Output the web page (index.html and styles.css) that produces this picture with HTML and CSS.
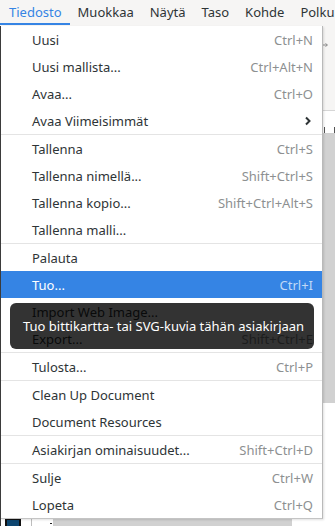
FILE: index.html
```html
<!DOCTYPE html>
<html lang="fi">
<head>
<meta charset="utf-8">
<title>Tiedosto</title>
<link rel="stylesheet" href="styles.css">
</head>
<body>
<div class="app">
  <nav class="menubar">
    <span class="mb-item active">Tiedosto</span>
    <span class="mb-item">Muokkaa</span>
    <span class="mb-item">Näytä</span>
    <span class="mb-item">Taso</span>
    <span class="mb-item">Kohde</span>
    <span class="mb-item">Polku</span>
  </nav>
  <div class="workspace">
    <div class="edge"></div>
    <div class="main">
      <div class="toolbar">
        <svg class="tb-arrow" width="6" height="6" viewBox="0 0 6 6"><path d="M0 3H4M2.5 1.5L4.5 3L2.5 4.5" fill="none" stroke="#8a8a8a" stroke-width="1"/></svg>
      </div>
      <div class="ruler"></div>
      <div class="canvas-area">
        <div class="side-panel">
          <div class="swatch-row">
            <span class="swatch"></span>
            <span class="vline"></span>
            <span class="tick"></span>
          </div>
        </div>
        <div class="canvas">
          <div class="sheet-top"></div>
          <div class="sheet-bottom"></div>
        </div>
      </div>
    </div>
  </div>

  <div class="menu">
    <div class="row"><span class="label">Uusi</span><span class="key">Ctrl+N</span></div>
    <div class="row"><span class="label">Uusi mallista...</span><span class="key">Ctrl+Alt+N</span></div>
    <div class="row"><span class="label">Avaa...</span><span class="key">Ctrl+O</span></div>
    <div class="row"><span class="label">Avaa Viimeisimmät</span><svg class="chev" width="8" height="10" viewBox="0 0 8 10"><path d="M2 1.5L5.5 5L2 8.5" fill="none" stroke="#2e3436" stroke-width="2"/></svg></div>
    <div class="sep"></div>
    <div class="row"><span class="label">Tallenna</span><span class="key">Ctrl+S</span></div>
    <div class="row"><span class="label">Tallenna nimellä...</span><span class="key">Shift+Ctrl+S</span></div>
    <div class="row"><span class="label">Tallenna kopio...</span><span class="key">Shift+Ctrl+Alt+S</span></div>
    <div class="row"><span class="label">Tallenna malli...</span></div>
    <div class="sep"></div>
    <div class="row"><span class="label">Palauta</span></div>
    <div class="row hl"><span class="label">Tuo...</span><span class="key">Ctrl+I</span></div>
    <div class="row"><span class="label">Import Web Image...</span></div>
    <div class="row"><span class="label">Export...</span><span class="key">Shift+Ctrl+E</span></div>
    <div class="sep"></div>
    <div class="row"><span class="label">Tulosta...</span><span class="key">Ctrl+P</span></div>
    <div class="sep"></div>
    <div class="row"><span class="label">Clean Up Document</span></div>
    <div class="row"><span class="label">Document Resources</span></div>
    <div class="sep"></div>
    <div class="row"><span class="label">Asiakirjan ominaisuudet...</span><span class="key">Shift+Ctrl+D</span></div>
    <div class="sep"></div>
    <div class="row"><span class="label">Sulje</span><span class="key">Ctrl+W</span></div>
    <div class="row"><span class="label">Lopeta</span><span class="key">Ctrl+Q</span></div>
  </div>

  <div class="tooltip">Tuo bittikartta- tai SVG-kuvia tähän asiakirjaan</div>
</div>
</body>
</html>
```

FILE: styles.css
```css
* { box-sizing: border-box; }
html, body {
  margin: 0;
  padding: 0;
}
body {
  width: 335px;
  height: 526px;
  overflow: hidden;
  font-family: "Noto Sans", "DejaVu Sans", sans-serif;
  font-size: 13px;
  color: #2e3436;
  background: #ffffff;
}
.app {
  position: relative;
  width: 335px;
  height: 526px;
  display: flex;
  flex-direction: column;
}
.menubar {
  height: 26px;
  flex: none;
  display: flex;
  background: #f6f5f4;
  white-space: nowrap;
  overflow: hidden;
}
.mb-item {
  height: 25px;
  line-height: 25px;
  padding: 0 8px;
  color: #2e3436;
}
.mb-item.active {
  padding-left: 9px;
  color: #3584e4;
  box-shadow: inset 0 -2px 0 #3584e4;
}
.workspace {
  flex: 1;
  display: flex;
  min-height: 0;
}
.edge {
  width: 1px;
  flex: none;
  background: #3c3c3c;
}
.main {
  flex: 1;
  display: flex;
  flex-direction: column;
}
.toolbar {
  height: 85px;
  flex: none;
  background: #f6f5f4;
  border-bottom: 1px solid #d6d6d6;
  display: flex;
  justify-content: flex-end;
  padding: 16px 6px 0 0;
}
.tb-arrow { display: block; }
.ruler {
  height: 23px;
  flex: none;
  background-color: #ffffff;
  background-image: repeating-linear-gradient(to right, transparent 0 3px, #555 3px 4px, transparent 4px 10px);
  background-size: 100% 6px;
  background-position: 0 100%;
  background-repeat: no-repeat;
  border-bottom: 1px solid #cfcfcf;
}
.canvas-area {
  flex: 1;
  display: flex;
  min-height: 0;
}
.side-panel {
  width: 52px;
  flex: none;
  display: flex;
  flex-direction: column;
  justify-content: flex-end;
  background: #ffffff;
}
.swatch-row {
  height: 8px;
  display: flex;
  align-items: stretch;
}
.swatch {
  width: 16px;
  margin-left: 4px;
  background: #0d4670;
  border: 2px solid #111;
  border-bottom: none;
}
.vline {
  width: 1px;
  margin-left: 10px;
  background: #bdbdbd;
}
.tick {
  width: 2px;
  height: 1px;
  margin-left: 18px;
  margin-top: 5px;
  background: #222;
}
.canvas {
  flex: 1;
  display: flex;
  flex-direction: column;
  background: #ffffff;
}
.sheet-top {
  height: 269px;
  background: #d1d1d1;
}
.sheet-bottom {
  flex: 1;
  width: 239px;
  background: #d1d1d1;
}

/* dropdown menu (overlay) */
.menu {
  position: absolute;
  left: 1px;
  top: 26px;
  width: 322px;
  background: #ffffff;
  border-right: 1px solid #b9b9b9;
  border-bottom: 1px solid #c4c4c4;
  box-shadow: 1px 1px 2px rgba(0,0,0,0.12);
}
.row {
  height: 27px;
  display: flex;
  align-items: center;
  justify-content: space-between;
  padding: 1px 9px 0 31px;
  white-space: nowrap;
}
.label { color: #2e3436; }
.key { color: #8d9091; }
.chev { display: block; margin-right: 1px; }
.row.hl {
  background: #3584e4;
}
.row.hl .label { color: #ffffff; }
.row.hl .key { color: rgba(255,255,255,0.7); }
.sep {
  height: 1px;
  background: #e4e4e4;
}

/* tooltip (overlay) */
.tooltip {
  position: absolute;
  left: 10px;
  top: 303px;
  width: 304px;
  height: 46px;
  border-radius: 6px;
  background: rgba(0,0,0,0.8);
  color: #ffffff;
  display: flex;
  align-items: center;
  padding-left: 13px;
  white-space: nowrap;
}
```
